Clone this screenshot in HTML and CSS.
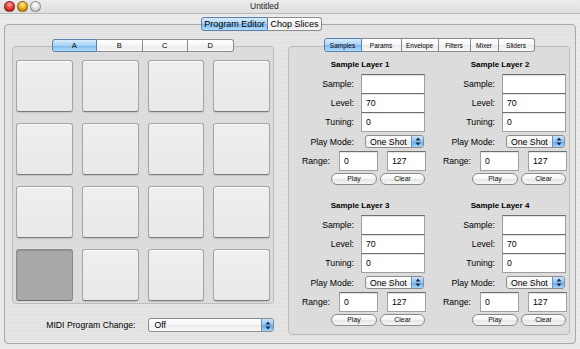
FILE: index.html
```html
<!DOCTYPE html>
<html>
<head>
<meta charset="utf-8">
<title>Untitled</title>
<link rel="stylesheet" href="styles.css">
</head>
<body>
<div class="window">
  <div class="titlebar">
    <div class="lights">
      <span class="light red"></span>
      <span class="light yellow"></span>
      <span class="light gray"></span>
    </div>
    <div class="title">Untitled</div>
  </div>
  <div class="content">
    <div class="seg main-tabs">
      <span class="seg-item active w-pe">Program Editor</span><span class="seg-item w-cs">Chop Slices</span>
    </div>
    <div class="tabbox">
      <div class="left">
        <div class="seg pad-tabs">
          <span class="seg-item active">A</span><span class="seg-item">B</span><span class="seg-item">C</span><span class="seg-item">D</span>
        </div>
        <div class="group pads-box">
          <div class="pads">
            <div class="pad"></div><div class="pad"></div><div class="pad"></div><div class="pad"></div>
            <div class="pad"></div><div class="pad"></div><div class="pad"></div><div class="pad"></div>
            <div class="pad"></div><div class="pad"></div><div class="pad"></div><div class="pad"></div>
            <div class="pad selected"></div><div class="pad"></div><div class="pad"></div><div class="pad"></div>
          </div>
        </div>
        <div class="midi-row">
          <span class="midi-label">MIDI Program Change:</span>
          <div class="popup midi-popup"><span class="popup-text">Off</span><span class="popup-cap"><svg width="6" height="9" viewBox="0 0 6 9"><path d="M3 0.5 L5.5 3.5 L0.5 3.5 Z M3 8.5 L5.5 5.5 L0.5 5.5 Z" fill="#1d2a44"/></svg></span></div>
        </div>
      </div>
      <div class="right">
        <div class="seg small-tabs">
          <span class="seg-item active t1">Samples</span><span class="seg-item t2">Params</span><span class="seg-item t3">Envelope</span><span class="seg-item t4">Filters</span><span class="seg-item t5">Mixer</span><span class="seg-item t6">Sliders</span>
        </div>
        <div class="group layers">
          <div class="layer">
            <div class="layer-title">Sample Layer 1</div>
            <div class="field first"><span class="lbl">Sample:</span><input class="txt" type="text" value=""></div>
            <div class="field"><span class="lbl">Level:</span><input class="txt" type="text" value="70"></div>
            <div class="field"><span class="lbl">Tuning:</span><input class="txt" type="text" value="0"></div>
            <div class="mode-row"><span class="lbl">Play Mode:</span><div class="popup mode-popup"><span class="popup-text">One Shot</span><span class="popup-cap"><svg width="6" height="9" viewBox="0 0 6 9"><path d="M3 0.5 L5.5 3.5 L0.5 3.5 Z M3 8.5 L5.5 5.5 L0.5 5.5 Z" fill="#1d2a44"/></svg></span></div></div>
            <div class="range-row"><span class="range-lbl">Range:</span><input class="txt small" type="text" value="0"><input class="txt small" type="text" value="127"></div>
            <div class="btn-row"><button class="pill play">Play</button><button class="pill clear">Clear</button></div>
          </div>
          <div class="layer">
            <div class="layer-title">Sample Layer 2</div>
            <div class="field first"><span class="lbl">Sample:</span><input class="txt" type="text" value=""></div>
            <div class="field"><span class="lbl">Level:</span><input class="txt" type="text" value="70"></div>
            <div class="field"><span class="lbl">Tuning:</span><input class="txt" type="text" value="0"></div>
            <div class="mode-row"><span class="lbl">Play Mode:</span><div class="popup mode-popup"><span class="popup-text">One Shot</span><span class="popup-cap"><svg width="6" height="9" viewBox="0 0 6 9"><path d="M3 0.5 L5.5 3.5 L0.5 3.5 Z M3 8.5 L5.5 5.5 L0.5 5.5 Z" fill="#1d2a44"/></svg></span></div></div>
            <div class="range-row"><span class="range-lbl">Range:</span><input class="txt small" type="text" value="0"><input class="txt small" type="text" value="127"></div>
            <div class="btn-row"><button class="pill play">Play</button><button class="pill clear">Clear</button></div>
          </div>
          <div class="layer">
            <div class="layer-title">Sample Layer 3</div>
            <div class="field first"><span class="lbl">Sample:</span><input class="txt" type="text" value=""></div>
            <div class="field"><span class="lbl">Level:</span><input class="txt" type="text" value="70"></div>
            <div class="field"><span class="lbl">Tuning:</span><input class="txt" type="text" value="0"></div>
            <div class="mode-row"><span class="lbl">Play Mode:</span><div class="popup mode-popup"><span class="popup-text">One Shot</span><span class="popup-cap"><svg width="6" height="9" viewBox="0 0 6 9"><path d="M3 0.5 L5.5 3.5 L0.5 3.5 Z M3 8.5 L5.5 5.5 L0.5 5.5 Z" fill="#1d2a44"/></svg></span></div></div>
            <div class="range-row"><span class="range-lbl">Range:</span><input class="txt small" type="text" value="0"><input class="txt small" type="text" value="127"></div>
            <div class="btn-row"><button class="pill play">Play</button><button class="pill clear">Clear</button></div>
          </div>
          <div class="layer">
            <div class="layer-title">Sample Layer 4</div>
            <div class="field first"><span class="lbl">Sample:</span><input class="txt" type="text" value=""></div>
            <div class="field"><span class="lbl">Level:</span><input class="txt" type="text" value="70"></div>
            <div class="field"><span class="lbl">Tuning:</span><input class="txt" type="text" value="0"></div>
            <div class="mode-row"><span class="lbl">Play Mode:</span><div class="popup mode-popup"><span class="popup-text">One Shot</span><span class="popup-cap"><svg width="6" height="9" viewBox="0 0 6 9"><path d="M3 0.5 L5.5 3.5 L0.5 3.5 Z M3 8.5 L5.5 5.5 L0.5 5.5 Z" fill="#1d2a44"/></svg></span></div></div>
            <div class="range-row"><span class="range-lbl">Range:</span><input class="txt small" type="text" value="0"><input class="txt small" type="text" value="127"></div>
            <div class="btn-row"><button class="pill play">Play</button><button class="pill clear">Clear</button></div>
          </div>
        </div>
      </div>
    </div>
  </div>
</div>
</body>
</html>
```
FILE: styles.css
```css
* { box-sizing: border-box; }
html, body { margin: 0; padding: 0; }
body {
  width: 580px;
  height: 349px;
  overflow: hidden;
  font-family: "Liberation Sans", Arial, sans-serif;
  color: #000;
  background: #e9e9e9;
}
.window {
  width: 580px;
  height: 349px;
  background: repeating-linear-gradient(to bottom, #ededed 0, #ededed 1px, #e6e6e6 1px, #e6e6e6 2px);
}
.titlebar {
  height: 14px;
  display: flex;
  align-items: center;
  border-bottom: 1px solid #b9b9b9;
  background: linear-gradient(#ececec, #dedede);
}
.lights { display: flex; gap: 2px; margin-left: 4px; }
.light {
  width: 11px; height: 11px; border-radius: 50%;
  border: 1px solid rgba(0,0,0,0.35);
}
.light.red { background: radial-gradient(circle at 50% 30%, #ffb0a8 0, #e8423a 45%, #a8140e 100%); }
.light.yellow { background: radial-gradient(circle at 50% 30%, #fff0a0 0, #f0b020 45%, #b07000 100%); }
.light.gray { background: radial-gradient(circle at 50% 30%, #ffffff 0, #e0e0e0 50%, #b8b8b8 100%); }
.title { margin-left: 209px; font-size: 8.5px; color: #222; line-height: 13px; }

.content { padding-top: 3px; }

.seg { display: flex; position: relative; z-index: 1; }
.seg-item {
  display: flex; align-items: center; justify-content: center;
  border: 1px solid #8c8c8c;
  border-left-width: 0;
  background: linear-gradient(#ffffff, #f6f6f6 50%, #ebebeb 51%, #f7f7f7);
  white-space: nowrap;
}
.seg-item:first-child { border-left-width: 1px; border-radius: 3px 0 0 3px; }
.seg-item:last-child { border-radius: 0 3px 3px 0; }
.seg-item.active {
  border-color: #5b7fa8;
  background: linear-gradient(#d6ebfc, #a9d2f5 50%, #7cb9ef 51%, #b2dcfb);
}

.main-tabs { margin-left: 201px; height: 14px; margin-bottom: -7px; font-size: 9px; }
.main-tabs .w-pe { width: 67px; }
.main-tabs .w-cs { width: 54px; }

.tabbox {
  margin: 0 4px 0 4px;
  height: 320px;
  border: 1px solid #a9a9a9;
  border-radius: 4px;
  background: rgba(0,0,0,0.025);
  display: flex;
  padding: 13px 4px 0 7px;
  gap: 14px;
}

.group {
  border: 1px solid #bdbdbd;
  border-radius: 4px;
  background: rgba(0,0,0,0.03);
}

.left { width: 262px; display: flex; flex-direction: column; padding-top: 1px; }
.pad-tabs { height: 13px; margin-bottom: -6px; align-self: center; font-size: 7.5px; margin-left: -1px; }
.pad-tabs .seg-item { width: 45.5px; }
.pads-box { height: 258px; padding: 13px 3px 0 3px; }
.pads {
  display: grid;
  grid-template-columns: repeat(4, 1fr);
  grid-template-rows: repeat(4, 52px);
  column-gap: 9px;
  row-gap: 11px;
}
.pad {
  border: 1px solid #a5a5a5;
  border-bottom-color: #7b7b7b;
  border-radius: 3px;
  background: linear-gradient(#efefef, #e9e9e9);
  box-shadow: inset 0 1px 0 #fbfbfb, 0 1px 1px rgba(0,0,0,0.12);
}
.pad.selected {
  background: #a9a9a9;
  border-color: #8a8a8a;
  border-bottom-color: #6e6e6e;
  box-shadow: inset 0 1px 1px rgba(0,0,0,0.15);
}

.midi-row { display: flex; align-items: center; margin-top: 14px; gap: 12px; }
.midi-label { width: 125px; text-align: right; font-size: 8.7px; }
.popup {
  display: flex; align-items: center;
  border: 1px solid #8c8c8c;
  border-radius: 3px;
  background: linear-gradient(#ffffff, #f4f4f4 50%, #eaeaea 51%, #f8f8f8);
  overflow: hidden;
}
.midi-popup { width: 128px; height: 14px; }
.popup-text { flex: 1; padding-left: 6px; font-size: 8.7px; }
.popup-cap {
  width: 12px; align-self: stretch;
  display: flex; align-items: center; justify-content: center;
  border-left: 1px solid #6a92c0;
  background: linear-gradient(#c8e2fa, #8ec3f2 50%, #5fa5e8 51%, #a4d3fa);
}

.right { width: 282px; display: flex; flex-direction: column; }
.small-tabs { height: 14px; margin-bottom: -6px; align-self: center; font-size: 6.5px; }
.small-tabs .t1 { width: 38px; }
.small-tabs .t2 { width: 40px; }
.small-tabs .t3 { width: 37px; }
.small-tabs .t4 { width: 32px; }
.small-tabs .t5 { width: 28px; }
.small-tabs .t6 { width: 36px; }

.layers {
  height: 289px;
  display: grid;
  grid-template-columns: 141px 139px;
  grid-template-rows: 126px 126px;
  row-gap: 15px;
  padding-top: 12px;
}
.layer { display: flex; flex-direction: column; font-size: 8.7px; }
.layer-title { height: 12px; line-height: 12px; text-align: center; font-weight: bold; font-size: 8px; padding-left: 1px; }
.field { display: flex; align-items: center; margin-top: -1px; }
.field.first { margin-top: 3px; }
.lbl { width: 65px; text-align: right; }
.txt {
  font-family: "Liberation Sans", Arial, sans-serif;
  font-size: 8.7px;
  color: #000;
  margin: 0;
  height: 20px;
  width: 64px;
  margin-left: 7px;
  padding: 0 0 0 4px;
  border: 1px solid #a0a0a0;
  border-top-color: #6f6f6f;
  background: #fff;
  box-shadow: inset 0 1px 1px rgba(0,0,0,0.12);
  outline: none;
}
.mode-row { display: flex; align-items: center; margin-top: 3px; }
.mode-popup { width: 59px; height: 13px; margin-left: 11px; }
.mode-popup .popup-text { padding-left: 4px; }
.range-row { display: flex; align-items: center; margin-top: 3px; }
.range-lbl { width: 41px; text-align: right; }
.txt.small { width: 39px; height: 20px; margin-left: 9px; }
.txt.small + .txt.small { margin-left: 9px; }
.btn-row { display: flex; gap: 3px; margin-top: 2px; padding-left: 42px; }
.pill {
  margin: 0; padding: 0;
  height: 12px;
  border: 1px solid #8a8a8a;
  border-radius: 6px;
  background: linear-gradient(#ffffff, #f5f5f5 50%, #e6e6e6 51%, #f6f6f6);
  font-family: "Liberation Sans", Arial, sans-serif;
  font-size: 7px;
  color: #111;
  line-height: 10px;
}
.pill.play { width: 46px; }
.pill.clear { width: 45px; }
```
